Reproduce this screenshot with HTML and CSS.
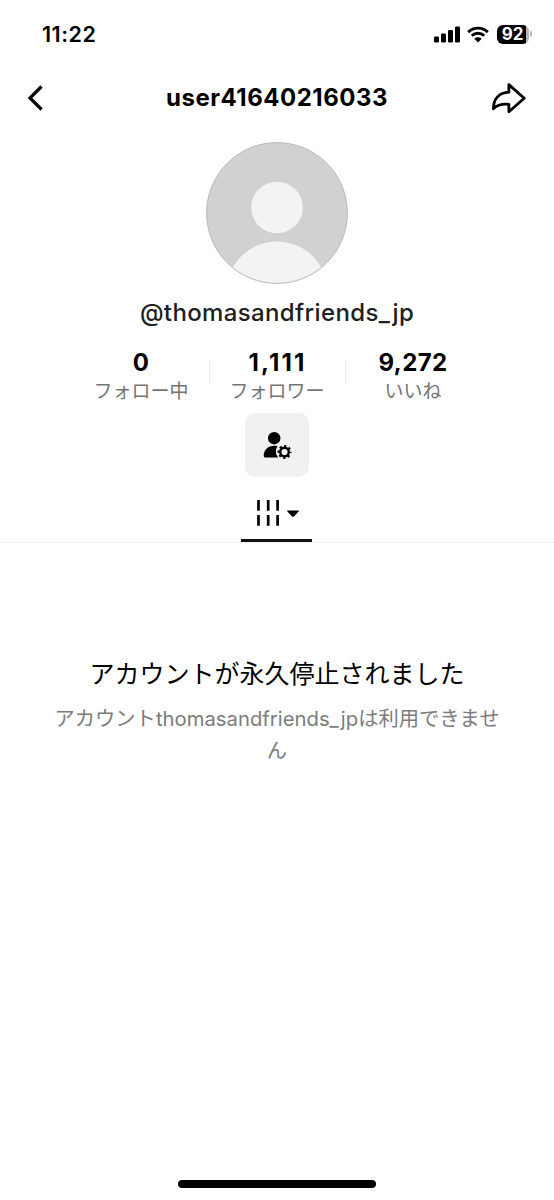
FILE: index.html
```html
<!DOCTYPE html>
<html lang="ja">
<head>
<meta charset="utf-8">
<title>user41640216033</title>
<link rel="stylesheet" href="styles.css">
</head>
<body>
<div class="screen">
  <div class="status">
    <span class="time">11:22</span>
    <div class="indicators">
      <svg class="signal" width="26" height="17" viewBox="0 0 26 17"><rect x="0" y="10.5" width="5" height="6" rx="1.3"/><rect x="7" y="7.5" width="5" height="9" rx="1.3"/><rect x="14" y="4" width="5" height="12.5" rx="1.3"/><rect x="21" y="0.5" width="5" height="16" rx="1.3"/></svg>
      <svg class="wifi" width="22" height="17" viewBox="0 0 22 17"><path d="M1.2 6.1a14 14 0 0 1 19.6 0M4.8 9.8a8.9 8.9 0 0 1 12.4 0" fill="none" stroke="#000" stroke-width="2.9"/><path d="M7.3 12.7a5.4 5.4 0 0 1 7.4 0L11 16.5z"/></svg>
      <div class="battery"><span class="level">92</span></div>
      <span class="tip"></span>
    </div>
  </div>
  <header class="nav">
    <svg class="back" width="20" height="28" viewBox="-1.500 0 20 28"><path d="M15 2.5 3.5 14 15 25.5" fill="none" stroke="#000" stroke-width="3.2"/></svg>
    <h1 class="title">user41640216033</h1>
    <svg class="share" width="36" height="34" viewBox="0 0 36 34"><path d="M17.9 3.6 33.2 17.3 17.9 30.8V23.4C10.500 22.600 6 24.200 2.400 27.700 2.600 17.800 8 11.700 17.900 11.200Z" fill="none" stroke="#000" stroke-width="2.8" stroke-linejoin="round"/></svg>
  </header>
  <main class="profile">
    <svg class="avatar" width="142" height="142" viewBox="0 0 142 142"><defs><clipPath id="face"><circle cx="71" cy="71" r="70.500"/></clipPath></defs><circle cx="71" cy="71" r="70.500" fill="#d0d1d3"/><g clip-path="url(#face)" fill="#f3f3f4"><circle cx="71" cy="65.500" r="25.800"/><circle cx="71" cy="150" r="50.500"/></g><circle cx="71" cy="71" r="70.400" fill="none" stroke="#b9babb" stroke-width="1"/></svg>
    <p class="handle">@thomasandfriends_jp</p>
    <div class="stats">
      <div class="stat"><b class="count">0</b><span class="label">フォロー中</span></div>
      <div class="stat"><b class="count count-ones">1,111</b><span class="label">フォロワー</span></div>
      <div class="stat"><b class="count">9,272</b><span class="label">いいね</span></div>
    </div>
    <div class="manage">
      <svg width="30" height="30" viewBox="0 0 30 30"><circle cx="12.200" cy="8.200" r="6.200"/><path d="M15.600 16.200C8 14.400 1.700 18.600 1.700 26Q1.700 27.400 3.200 27.400H16.200A8.600 8.600 0 0 1 15.600 16.200Z"/><circle cx="22.500" cy="22" r="4.300" fill="none" stroke="#000" stroke-width="2.400"/><circle cx="22.500" cy="22" r="6" fill="none" stroke="#000" stroke-width="2" stroke-dasharray="2.200 2.512" stroke-dashoffset="1.100"/></svg>
    </div>
  </main>
  <nav class="tabs">
    <div class="tab">
      <svg width="42" height="28" viewBox="0 0 42 28"><path d="M1.500 1v10.800M11.200 1v10.800M20.600 1v10.800M1.500 16v10.800M11.200 16v10.800M20.600 16v10.800" stroke="#000" stroke-width="2.700"/><path d="M30.600 11.400H41.400Q42.300 11.600 41.600 12.400L37 17.400Q36 18.300 35 17.400L30.400 12.400Q29.700 11.600 30.600 11.400Z"/></svg>
    </div>
  </nav>
  <section class="notice">
    <h2 class="notice-title">アカウントが永久停止されました</h2>
    <p class="notice-text">アカウントthomasandfriends_jpは利用できません</p>
  </section>
  <div class="home"></div>
</div>
</body>
</html>
```
FILE: styles.css
```css
* { box-sizing: border-box; }
body { margin: 0; background: #fff; color: #000; font-family: Inter, "Noto Sans CJK JP", sans-serif; }
h1, h2, p { margin: 0; }
svg { display: block; flex: none; }
.screen { width: 554px; height: 1200px; display: flex; flex-direction: column; overflow: hidden; }
.status { height: 68px; padding: 0 22px 0 42px; display: flex; align-items: center; justify-content: space-between; }
.time { font-size: 21.5px; font-weight: 600; letter-spacing: 0.5px; }
.indicators { display: flex; align-items: center; }
.wifi { margin-left: 7px; }
.battery { margin-left: 8px; width: 32px; height: 19px; border-radius: 6px; background: linear-gradient(90deg, #000 29px, #b5b5b5 29px); }
.level { display: block; width: 31px; text-align: center; color: #fff; font-size: 17px; line-height: 19px; font-weight: 700; }
.tip { width: 2px; height: 6px; margin-left: 1px; border-radius: 0 3px 3px 0; background: #b5b5b5; }
.nav { height: 59px; padding: 0 27px 0 25px; display: grid; grid-template-columns: 36px 1fr 36px; align-items: center; }
.title { text-align: center; font-size: 24px; line-height: 30px; font-weight: 700; letter-spacing: 0.5px; padding-left: 2px; white-space: nowrap; }
.profile { display: flex; flex-direction: column; align-items: center; padding-top: 15px; }
.handle { margin-top: 12px; height: 34px; line-height: 34px; font-size: 24px; font-weight: 500; letter-spacing: 0.37px; color: #202020; }
.stats { display: flex; margin-top: 19px; height: 54px; }
.stat { width: 136px; display: flex; flex-direction: column; align-items: center; position: relative; }
.stat + .stat::before { content: ""; position: absolute; left: 0; top: 12px; width: 1px; height: 23px; background: #ededed; }
.count { font-size: 24px; line-height: 28px; letter-spacing: 0.4px; }
.count-ones { letter-spacing: 2.2px; padding-left: 1px; }
.label { margin-top: 2px; font-size: 19px; line-height: 26px; color: #737373; }
.manage { width: 64px; height: 64px; margin-top: 10px; border-radius: 10px; background: #f1f1f1; display: grid; place-items: center; }
.tabs { height: 66px; padding-right: 1px; display: flex; justify-content: center; border-bottom: 1px solid #eee; }
.tab { width: 71px; height: 65px; padding: 22px 0 0 16px; border-bottom: 3px solid #111019; }
.notice { padding: 111px 50px 0; text-align: center; }
.notice-title { font-size: 25px; line-height: 40px; font-weight: 400; white-space: nowrap; }
.notice-text { margin-top: 9px; font-size: 20.3px; line-height: 32px; color: #7c7c7c; }
.home { width: 198px; height: 8px; margin: auto auto 12px; border-radius: 4px; background: #000; }
```
